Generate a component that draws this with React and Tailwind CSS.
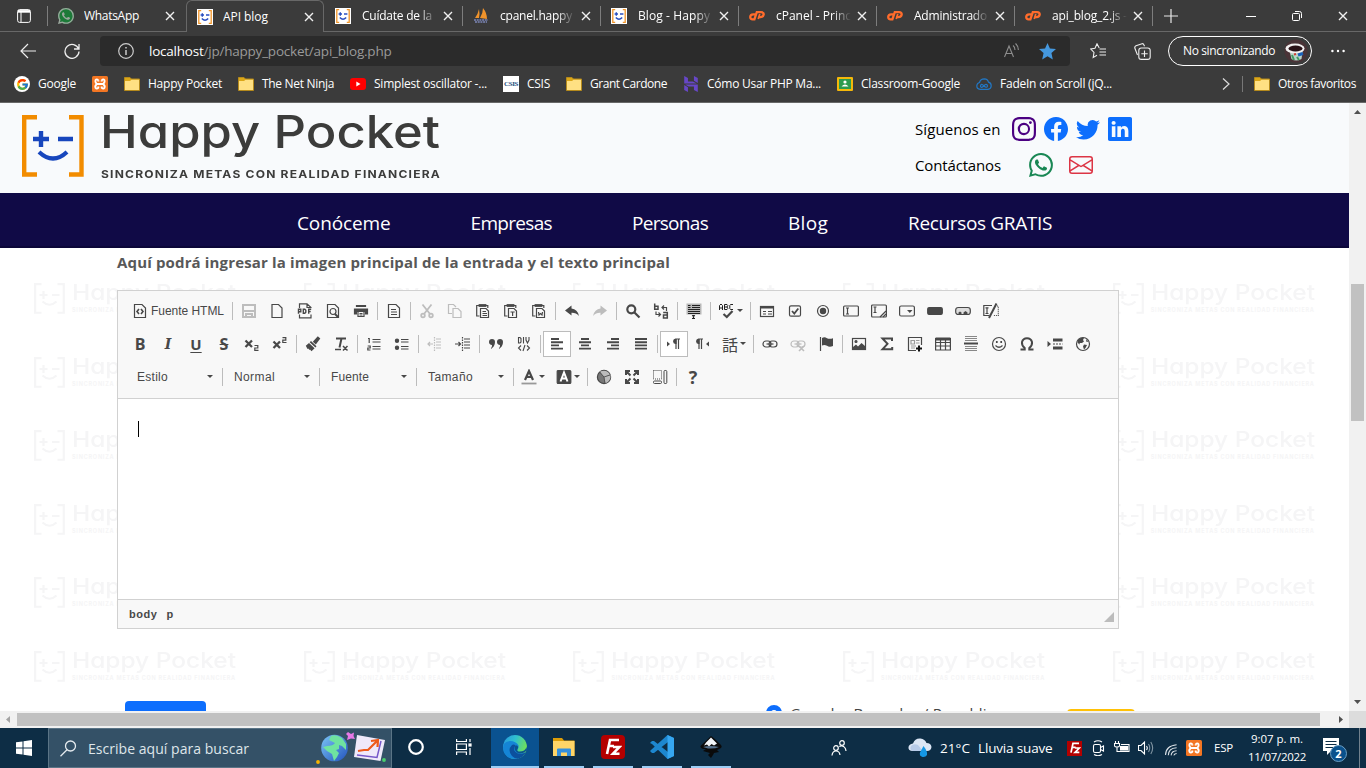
import React, { useLayoutEffect, useRef } from "react";
import { FcGoogle } from "react-icons/fc";
import { SiHostinger } from "react-icons/si";
import { BsInstagram, BsFacebook, BsTwitter, BsLinkedin, BsWhatsapp, BsEnvelope } from "react-icons/bs";

/* Text spread over a given width by letter spacing, or by horizontal scale. */
function Fit({ w, stretch, className = "", children }) {
  const ref = useRef(null);
  useLayoutEffect(() => {
    const el = ref.current;
    el.style.transform = "none";
    if (!stretch) el.style.letterSpacing = "0px";
    const natural = el.getBoundingClientRect().width;
    if (stretch) el.style.transform = `scaleX(${w / natural})`;
    else el.style.letterSpacing = `${(w - natural) / el.textContent.length}px`;
  }, [w, stretch]);
  return (
    <span ref={ref} className={"inline-block origin-left whitespace-nowrap " + className}>
      {children}
    </span>
  );
}

const UI = "font-['Open_Sans','Noto_Sans',sans-serif]";

/* ---------- shared marks ---------- */
function Face({ className, bracket, face }) {
  return (
    <svg className={className} viewBox="0 0 62 62" fill="none">
      <path d="M15 2.2H2.2V59.5H15M47 2.2H59.5V59.5H47" stroke={bracket} strokeWidth="4.4" />
      <path d="M11 24H27M19 16V32M36 24H51" stroke={face} strokeWidth="4.4" />
      <path d="M17 37Q31 50 45 37" stroke={face} strokeWidth="4.2" />
    </svg>
  );
}
const Favicon = () => (
  <span className="flex size-4 items-center justify-center bg-white">
    <svg className="size-4" viewBox="0 0 16 16" fill="none">
      <path d="M4.2 1.7H1.8V14.3H4.2M11.8 1.7H14.2V14.3H11.8" stroke="#f0952a" strokeWidth="1.3" />
      <path d="M3.6 6H7M5.3 4.3V7.7M9 6H12.4M4.8 9.6Q8 13 11.2 9.6" stroke="#2a4fc0" strokeWidth="1.4" />
    </svg>
  </span>
);
const Folder = () => (
  <svg className="size-4" viewBox="0 0 16 16">
    <path d="M.5 1.5H6L7.5 3H15.5V14.5H.5Z" fill="#dba617" stroke="#b58a1c" />
    <path d="M1 5H6L7.5 3.7H15V14H1Z" fill="#ffe083" />
  </svg>
);
const Xampp = () => (
  <svg className="size-4 shrink-0" viewBox="0 0 16 16" fill="none">
    <rect width="16" height="16" rx="1.5" fill="#f37623" />
    <path d="M6.3 4.2Q4.6 2.6 3.5 4.2Q2.8 6 4.6 8Q2.8 10 3.5 11.8Q4.6 13.4 6.3 11.8V10.5M9.7 4.2Q11.4 2.6 12.5 4.2Q13.2 6 11.4 8Q13.2 10 12.5 11.8Q11.4 13.4 9.7 11.8V10.5M6.3 4.2V5.5M9.7 4.2V5.5M5 8H11" stroke="#fff" strokeWidth="1.9" strokeLinejoin="round" />
  </svg>
);
const Close = () => (
  <svg className="size-[10px]" viewBox="0 0 10 10" stroke="#f0f0f0" strokeWidth="1.4">
    <path d="M1 1L9 9M9 1L1 9" />
  </svg>
);

/* ---------- browser ---------- */
function Tab({ icon, label, w, active, sep, fade }) {
  return (
    <div
      className={
        "relative flex h-full w-[138px] shrink-0 items-center pl-[10px] " +
        (active ? "rounded-t-md border-x border-t border-[#686868] bg-[#3b3b3b]" : "border-b border-[#686868]")
      }
    >
      <span className="flex size-4 items-center">{icon}</span>
      <span className={"overflow-hidden text-[12px] leading-4 text-white " + (fade ? "ml-[11px] w-[75px] [mask-image:linear-gradient(to_right,#000_76%,transparent_100%)]" : "ml-[10px] w-[76px]")}>
        <Fit w={w}>{label}</Fit>
      </span>
      <span className={fade ? "ml-[6px]" : "ml-[5px]"}><Close /></span>
      {sep && <i className="absolute right-0 top-[6px] h-5 w-px bg-[#7d7d7d]" />}
    </div>
  );
}
const CP = () => (
  <svg className="size-4" viewBox="0 0 16 16" fill="none" stroke="#ff6c2c" strokeWidth="2.3">
    <path d="M6.2 6.3H4.2Q1.3 6.5 1.2 9Q1.3 11.2 3.6 11.3H5.4L7.8 4.2H12Q14.8 4.4 14.7 6.5Q14.3 9 11.5 9.2H9.5" />
    <path d="M10.8 6L9.2 11" strokeWidth="1.7" />
  </svg>
);

function Tabs() {
  return (
    <div className="flex h-8 items-stretch">
      <div className="relative flex w-12 shrink-0 items-center border-b border-[#686868] pl-[17px]">
        <svg className="size-[14px]" viewBox="0 0 14 14" fill="none" stroke="#fff">
          <rect x=".6" y=".6" width="12.8" height="12.8" rx="2" />
          <path d="M1 2.4H13" strokeWidth="2.6" /><path d="M4 3V13" />
        </svg>
        <i className="absolute right-0 top-[6px] h-5 w-px bg-[#7d7d7d]" />
      </div>
      <Tab icon={<span className="flex size-4 items-center justify-center rounded-full bg-[#1c7a38] text-[#9aa79d]"><BsWhatsapp className="size-4" /></span>} label="WhatsApp" w={55} />
      <Tab active icon={<Favicon />} label="API blog" w={45} />
      <div className="w-px border-b border-[#686868]" />
      <Tab sep fade icon={<Favicon />} label="Cuídate de la" w={70} />
      <Tab sep fade icon={
        <svg className="size-4" viewBox="0 0 16 16"><path d="M2 10Q5 6 6 1Q7 6 6 10ZM7 10Q10 5 10 0Q14 5 14 11Z" fill="#f0932b" /><path d="M1 12H15M2 14H14" stroke="#7c86b8" strokeWidth="1.7" strokeDasharray="2 .7" /></svg>
      } label="cpanel.happy" w={72} />
      <Tab sep fade icon={<Favicon />} label="Blog - Happy" w={72} />
      <Tab sep fade icon={<CP />} label="cPanel - Princ" w={75} />
      <Tab sep fade icon={<CP />} label="Administrado" w={73} />
      <Tab sep fade icon={<CP />} label="api_blog_2.js -" w={75} />
      <div className="flex flex-1 items-center border-b border-[#686868] pl-[11px]">
        <svg className="size-[14px]" viewBox="0 0 14 14" stroke="#e8e8e8" strokeWidth="1.2"><path d="M7 0V14M0 7H14" /></svg>
        <svg className="ml-[68px] h-3 w-[10px]" viewBox="0 0 10 12" stroke="#fff"><path d="M0 6.5H10" /></svg>
        <svg className="ml-[36px] size-[10px]" viewBox="0 0 10 10" fill="none" stroke="#fff"><rect x=".5" y="2.5" width="7" height="7" rx="1" /><path d="M3 .5H7.5Q9.5.5 9.5 2.5V7" /></svg>
        <span className="ml-[36px]"><Close /></span>
      </div>
    </div>
  );
}

function AddressRow() {
  return (
    <div className="flex h-[38px] items-center">
      <svg className="ml-5 size-4" viewBox="0 0 16 16" fill="none" stroke="#eee" strokeWidth="1.2"><path d="M16 8H1M8 1L1 8L8 15" /></svg>
      <svg className="ml-7 size-4" viewBox="0 0 16 16" fill="none" stroke="#eee" strokeWidth="1.3"><path d="M14.6 6A7 7 0 1 0 15 8.6M15 1V6H10" /></svg>
      <div className="ml-5 flex h-[30px] w-[970px] items-center rounded bg-[#2b2b2b] pl-[18px]">
        <svg className="size-4" viewBox="0 0 16 16" fill="none" stroke="#ccc" strokeWidth="1.2"><circle cx="8" cy="8" r="7.3" /><path d="M8 7V12M8 4V5.6" strokeWidth="1.5" /></svg>
        <Fit w={54.5} className="ml-[15px] text-[13.5px] text-white">localhost</Fit>
        <Fit w={188} className="text-[13.5px] text-[#9a9a9a]">/jp/happy_pocket/api_blog.php</Fit>
        <svg className="ml-[612px] h-4 w-[15px]" viewBox="0 0 15 16" fill="none" stroke="#8e8e8e" strokeWidth="1.1"><path d="M.5 14L5 3L9.5 14M2 10.5H8M9 2.5Q11 4 11 7M11.5.5Q14.5 3 14.3 7" /></svg>
        <svg className="ml-5 size-[17px]" viewBox="0 0 16 16" fill="#4598de"><path d="M8 0L10.3 5.1L16 5.7L11.7 9.5L13 15.5L8 12.4L3 15.5L4.3 9.5L0 5.7L5.7 5.1Z" /></svg>
      </div>
      <svg className="ml-5 size-4" viewBox="0 0 16 16" fill="none" stroke="#eee" strokeWidth="1.1"><path d="M9.2 5L7 .8L5 5.3L.8 6L4 9.5L3.2 14.5L7 12.3M9.5 6H16M9.5 9H16M9.5 12H16" /></svg>
      <svg className="ml-7 size-[17px]" viewBox="0 0 17 17" fill="none" stroke="#eee" strokeWidth="1.1"><path d="M3.5 12L.8 5Q.5 3.5 2 2.7L8 .7Q9.5.5 10 2L10.5 3.2" /><rect x="4.8" y="5" width="11.4" height="11.4" rx="2.5" /><path d="M10.5 7.5V14M7.3 10.7H13.7" /></svg>
      <div className="ml-[17px] flex h-[30px] w-[144px] items-center rounded-full border border-white pl-[14px]">
        <Fit w={92} className="text-[12px] text-white">No sincronizando</Fit>
        <svg className="ml-[9px] size-6" viewBox="0 0 24 24">
          <circle cx="12" cy="12" r="11.5" fill="#4a3337" />
          <path d="M5 10H19L17.5 20Q12 23 7.5 20Z" fill="#b9d2c8" />
          <ellipse cx="11" cy="9.5" rx="9.5" ry="5" fill="#f2f0f0" /><ellipse cx="11.5" cy="9.5" rx="7" ry="3" fill="#2a1217" />
          <path d="M14 16L19 14.5" stroke="#1b61ba" strokeWidth="3" /><path d="M8 16L10 21M13 18L15 21" stroke="#3f9b62" strokeWidth="2" fill="none" /><path d="M10 15.5L12 15" stroke="#cf3c2d" strokeWidth="2" />
        </svg>
      </div>
      <svg className="ml-[19px] h-1 w-[14px]" viewBox="0 0 14 4" fill="#fff"><circle cx="1.4" cy="2" r="1.2" /><circle cx="7" cy="2" r="1.2" /><circle cx="12.6" cy="2" r="1.2" /></svg>
    </div>
  );
}

function Mark({ icon, label, w }) {
  return (
    <div className="flex items-center gap-2">
      {icon}
      {label && <Fit w={w} className="text-[12px] leading-4 text-white">{label}</Fit>}
    </div>
  );
}

function Bookmarks() {
  return (
    <div className="flex h-8 items-center gap-4 border-b border-[#686868] pb-[5px] pl-[14px]">
      <Mark icon={<span className="flex size-4 items-center justify-center rounded-full bg-white"><FcGoogle className="size-[13px]" /></span>} label="Google" w={38} />
      <Mark icon={<Xampp />} />
      <Mark icon={<Folder />} label="Happy Pocket" w={74} />
      <Mark icon={<Folder />} label="The Net Ninja" w={72} />
      <Mark icon={<svg className="size-4" viewBox="0 0 16 16"><rect y="2" width="16" height="12" rx="3" fill="#f00" /><path d="M6.3 5.5V10.5L10.5 8Z" fill="#fff" /></svg>} label="Simplest oscillator -..." w={113} />
      <Mark icon={<span className="flex size-4 items-center justify-center bg-white font-['Liberation_Serif',serif] text-[7px] font-bold tracking-[-0.4px] text-[#1c4e7c]">CSIS</span>} label="CSIS" w={23} />
      <Mark icon={<Folder />} label="Grant Cardone" w={77} />
      <Mark icon={<SiHostinger className="size-4 text-[#6747c7]" />} label="Cómo Usar PHP Ma..." w={114} />
      <Mark icon={<svg className="size-4" viewBox="0 0 16 16"><rect y="1" width="16" height="14" rx="1" fill="#f6b80a" /><rect x="2" y="3" width="12" height="10" fill="#2c9b4f" /><circle cx="8" cy="6" r="1.6" fill="#fff" /><path d="M4.5 10.5Q8 6.5 11.5 10.5Z" fill="#fff" /></svg>} label="Classroom-Google" w={99} />
      <Mark icon={<svg className="size-4" viewBox="0 0 16 16" fill="none" stroke="#2277c4" strokeWidth="1.2"><path d="M4 13.3Q.7 13 .8 9.8Q1 7 3.5 6.5Q4.5 2.8 8.3 2.8Q11.8 3 12.5 6.2Q15.3 7 15.2 10Q15 13 12 13.3Z" /><path d="M8 10Q5.8 7.5 4.8 9Q4 11 5.5 11.3Q6.5 11.4 8 10Q9.5 7.7 11 8.7Q12 10 11 11Q9.7 11.8 8 10" /></svg>} label="FadeIn on Scroll (jQ..." w={112} />
      <svg className="ml-[94px] h-3 w-[8px]" viewBox="0 0 8 12" fill="none" stroke="#ddd" strokeWidth="1.2"><path d="M1 .5L7 6L1 11.5" /></svg>
      <i className="-ml-[4px] h-4 w-px bg-[#777]" />
      <div className="-ml-[5px]"><Mark icon={<Folder />} label="Otros favoritos" w={78} /></div>
    </div>
  );
}

/* ---------- site ---------- */
function SiteHeader() {
  return (
    <header className="flex h-[90px] shrink-0 bg-[#f8fafc] pl-[22px] pt-3">
      <Face className="size-[62px]" bracket="#f28c00" face="#1746bd" />
      <div className="ml-[16px] flex w-[341px] flex-col text-[#3c3c3b]">
        <Fit w={340} stretch className="-mt-[8px] self-start font-['Inter',sans-serif] text-[45px] font-medium leading-[50px] [font-feature-settings:'cv11'_1]">Happy Pocket</Fit>
        <Fit w={340} stretch className="ml-px mt-[9px] self-start font-['Inter',sans-serif] text-[11px] font-bold leading-4 tracking-[1.1px]">SINCRONIZA METAS CON REALIDAD FINANCIERA</Fit>
      </div>
      <div className="ml-[474px] flex flex-col gap-3 text-[15px] leading-6 text-black">
        <div className="flex h-6 items-center">
          <Fit w={85.5} className="pt-[3px]">Síguenos en</Fit>
          <div className="ml-[11.5px] flex gap-2 pt-1 text-[#0d6efd]">
            <BsInstagram className="size-6 text-[#4b0082]" />
            <BsFacebook className="size-6" />
            <BsTwitter className="size-6" />
            <BsLinkedin className="size-6" />
          </div>
        </div>
        <div className="flex h-6 items-center">
          <Fit w={86} className="pt-[3px]">Contáctanos</Fit>
          <div className="ml-7 flex gap-4 pt-1">
            <BsWhatsapp className="size-6 text-[#198754]" />
            <BsEnvelope className="size-6 text-[#dc3545]" />
          </div>
        </div>
      </div>
    </header>
  );
}

const NAV = [["Conóceme", 93.5], ["Empresas", 81.5], ["Personas", 76], ["Blog", 40], ["Recursos GRATIS", 144]];

function Watermark() {
  return (
    <div className="flex h-[34px] gap-[7px]">
      <Face className="size-[31px]" bracket="#f5f5f6" face="#f5f5f6" />
      <div className="flex flex-col text-[#f5f5f6]">
        <Fit w={164} stretch className="-mt-[3px] self-start font-['Inter',sans-serif] text-[22px] font-medium leading-6 [font-feature-settings:'cv11'_1]">Happy Pocket</Fit>
        <Fit w={164} className="mt-[2px] self-start font-['Inter',sans-serif] text-[5.5px] font-bold leading-[8px]">SINCRONIZA METAS CON REALIDAD FINANCIERA</Fit>
      </div>
    </div>
  );
}

/* ---------- editor ---------- */
const G = ({ children, dim, sw = 1.2, fill = "none" }) => (
  <svg className={"size-4 shrink-0 " + (dim ? "text-[#bdbdbd]" : "text-[#484848]")} viewBox="0 0 16 16" fill={fill} stroke="currentColor" strokeWidth={sw}>
    {children}
  </svg>
);
const Btn = ({ children, on }) => (
  <span className={"flex h-[26px] w-7 shrink-0 items-center justify-center " + (on ? "border border-[#bcbcbc] bg-white" : "")}>{children}</span>
);
const Arrow = () => <svg className="h-[3px] w-[6px]" viewBox="0 0 6 3" fill="#484848"><path d="M0 0H6L3 3Z" /></svg>;
const Drop = ({ children }) => (
  <span className="flex h-[26px] w-[35px] shrink-0 items-center gap-[2px] pl-[6px]">{children}<Arrow /></span>
);
const Sep = () => <i className="ml-[2px] mr-[2px] h-[18px] w-px shrink-0 bg-[#bcbcbc]" />;
const Letter = ({ children, className = "" }) => (
  <b className={"flex h-4 w-4 items-center justify-center leading-4 text-[#484848] " + className}>{children}</b>
);
const page = "M2.5 1.5H10L13.5 5V14.5H2.5Z";
const clip = "M4 2.5H1.7V13H4.5M11 2.5H12.8V5";
const clipTop = <path d="M4.5 2H10.5V3H4.5Z" strokeWidth="1.8" />;
const chain = <><rect x="1" y="5" width="8" height="6" rx="3" /><rect x="7" y="5" width="8" height="6" rx="3" /><path d="M4.5 8H11.5" /></>;

function Row1() {
  return (
    <div className="flex h-[33px] items-center">
      <span className="flex w-[104px] items-center pl-[6px]">
        <G><path d={page} /><path d="M7 6L5 8.5L7 11M9 6L11 8.5L9 11" strokeWidth="1.6" /></G>
        <Fit w={73} className="ml-[3px] text-[12px]">Fuente HTML</Fit>
      </span>
      <Sep />
      <Btn><G dim sw={2}><path d="M2 2H14V14H2ZM2 8H14M5 14V11H11V14" /></G></Btn>
      <Btn><G><path d="M3 1.5H9.5L13 5V14.5H3Z" /></G></Btn>
      <Btn><G><path d="M2.5 5V.8H10L14 4.5V5M2.5 11.5V14.8H14V11.5M10 1V4.5H14" /><path strokeWidth="1.4" d="M1.5 10.8V6.3H3.8V8.8H1.5M6.3 6.3H7.8L8.8 7.3V9.2L7.8 10.2H6.3ZM11.7 10.8V6.3H14.2M11.7 8.5H13.7" /></G></Btn>
      <Btn><G><path d={page} /><circle cx="8" cy="8.5" r="3" /><path d="M10 11L13 14" strokeWidth="2" /></G></Btn>
      <Btn><G fill="currentColor"><path d="M3.5 2.5H12.5V3.5H3.5ZM1.5 6H14.5V11H12.5V8.5H3.5V11H1.5Z" /><path fill="none" d="M5 8.5V13.5H11V8.5M6.5 10.5H9.5M6.5 12H9.5" /></G></Btn>
      <Sep />
      <Btn><G><path d={page} /><path d="M5 6.5H10M5 9H11M5 11.5H11" /></G></Btn>
      <Sep />
      <Btn><G dim sw={1.8}><path d="M3.5 1.5L11 11M12.5 1.5L5 11" /><circle cx="4" cy="12.5" r="1.8" /><circle cx="12" cy="12.5" r="1.8" /></G></Btn>
      <Btn><G dim><path d="M5 10.5H1.5V1.5H6.5L9 4M6 5.5H11L14 8.5V14.5H6Z" /></G></Btn>
      <Btn><G><path d={clip} />{clipTop}<path d="M5.5 5.5H11L13.5 8V14.5H5.5ZM7.5 8.5H11M7.5 10.5H12M7.5 12.5H12" /></G></Btn>
      <Btn><G><path d={clip} />{clipTop}<path d="M5.5 5.5H11L13.5 8V14.5H5.5ZM7.5 9H11.7M9.6 9V13" /></G></Btn>
      <Btn><G><path d={clip} />{clipTop}<path d="M5.5 5.5H11L13.5 8V14.5H5.5ZM7.5 9L8 12L9.5 10.5L11 12L11.5 9" /></G></Btn>
      <Sep />
      <Btn><G fill="currentColor" sw={0}><path d="M1 7.5L7.5 2.5V5.5Q13.5 6 15 13Q12 9.5 7.5 9.7V12.5Z" /></G></Btn>
      <Btn><G dim fill="currentColor" sw={0}><path d="M15 7.5L8.5 2.5V5.5Q2.5 6 1 13Q4 9.5 8.5 9.7V12.5Z" /></G></Btn>
      <Sep />
      <Btn><G sw={2.2}><circle cx="6.3" cy="6.3" r="4" /><path d="M9.5 9.5L14.5 14.5" /></G></Btn>
      <Btn><G sw={1.5}><path d="M1.7.5V6.3H5V3.2H1.7M10.2 9.5H14.3V15H10.5V12H14.3" /><path strokeWidth="1.2" d="M9 4.5H13.5V8M11 2.5L9 4.5L11 6.5M3 8.5V11.5H7.5M5.5 9.5L7.5 11.5L5.5 13.5" /></G></Btn>
      <Sep />
      <Btn><G><path d="M.5.5H15.5V11.5H.5Z" fill="#b9b9b9" stroke="none" /><path stroke="#222" d="M2 2.5H4.5M6 2.5H14M2 4.5H4.5M6 4.5H14M2 6.5H14M2 8.5H14M2 10.5H14M6 12.5L7.5 13L9 12.5M7.5 12V16M6 15.5H9" /></G></Btn>
      <Sep />
      <Drop><G><path stroke="#222" strokeWidth="1" d="M.5 7V2.5L2 1L3.5 2.5V7M.5 5H3.5M5.5 1.5V6.5H8L8.8 5.5L8 4L8.8 2.5L8 1.5H5.5M5.5 4H8M14 1.5H11.5L10.8 2.5V5.5L11.5 6.5H14" /><path d="M4.5 11L7.8 14L13.5 8" strokeWidth="2.2" /></G></Drop>
      <Sep />
      <Btn><G><rect x="1.5" y="3.5" width="13" height="10" /><path d="M1.5 4.5H14.5" strokeWidth="2" /><path d="M4 8.5H7M9 8.5H13M4 11H7M9 11H13" /></G></Btn>
      <Btn><G><rect x="2.5" y="2.8" width="11" height="10.4" rx="1.5" /><path d="M5 8L7.3 10.5L11.3 5.5" strokeWidth="1.8" /></G></Btn>
      <Btn><G><circle cx="8" cy="8" r="5.5" /><circle cx="8" cy="8" r="2.6" fill="currentColor" /></G></Btn>
      <Btn><G><rect x=".6" y="3" width="14.8" height="10" rx="1" /><path d="M3 5H6M4.5 5V11M3 11H6" /></G></Btn>
      <Btn><G><rect x=".6" y="2" width="14.8" height="12" rx="1" /><path d="M2.5 4H5.5M4 4V9.5M2.5 9.5H5.5M9 14L15 8M12 14L15 11" /></G></Btn>
      <Btn><G><rect x=".6" y="3" width="14.8" height="10" rx="1.5" /><path d="M8 7H13.5L10.8 10Z" fill="currentColor" stroke="none" /></G></Btn>
      <Btn><G fill="currentColor"><rect x=".7" y="4.5" width="14.6" height="7" rx="1.5" /></G></Btn>
      <Btn><G><rect x=".7" y="4.5" width="14.6" height="7" rx="2.5" fill="#ddd" /><path d="M3.5 11V9.5L5 8.5L6.5 9.5V11ZM8.5 11V9.5L10.5 8L12.5 9.5V11Z" fill="currentColor" stroke="none" /></G></Btn>
      <Btn><G><path d="M9 2.5H.8V12.5H6M2.5 4.8H5.5M4 4.8V10.5M2.5 10.5H5.5" /><path d="M13.5.5L6 15" strokeWidth="2" /><path d="M12 3H15.3V12.5H10" strokeDasharray="1 1" /></G></Btn>
    </div>
  );
}

const Lines = ({ a, b }) => <G sw={1.9}><path d={`M${a} 3H${b}M2 6.2H14M${a} 9.4H${b}M2 12.6H14`} /></G>;

function Row2() {
  return (
    <div className="flex h-[33px] items-center">
      <Btn><Letter className="font-['Open_Sans',sans-serif] text-[16px]">B</Letter></Btn>
      <Btn><Letter className="font-['DejaVu_Serif',serif] text-[14px] italic">I</Letter></Btn>
      <Btn><Letter className="font-['Open_Sans',sans-serif] text-[15px] underline underline-offset-2">U</Letter></Btn>
      <Btn><Letter className="font-['Open_Sans',sans-serif] text-[16px] line-through">S</Letter></Btn>
      <Btn><G><path d="M1.5 4.5L8 11M8 4.5L1.5 11" strokeWidth="2.3" /><path d="M10.5 9.5H13.8V12H10.8V14.3H14.5" /></G></Btn>
      <Btn><G><path d="M1.5 5.5L8 12M8 5.5L1.5 12" strokeWidth="2.3" /><path d="M10.5 1.7H13.8V4.2H10.8V6.5H14.5" /></G></Btn>
      <Sep />
      <Btn><G fill="currentColor" sw={0}><path d="M12.8.3L15.3 2.5L10.8 8.5L7.8 5.8Z" /><path d="M6 5L11.5 10.3L10.4 11.5L4.7 6.3ZM4 7L9.6 12.2L6.5 15.2L5 13.5L4.5 14L3.2 12.5L2.5 13L.8 9.8Z" /></G></Btn>
      <Btn><G><path d="M3 2.5H13M8.5 2.5L6.5 11.5" strokeWidth="2" /><path d="M2 13.5H8M10 10L14.5 14.5M14.5 10L10 14.5" strokeWidth="1.5" /></G></Btn>
      <Sep />
      <Btn><G><path d="M2 2.5H3.2V7M1.7 10H4.2V12H1.8V14H4.5M6.5 3.5H14.5M6.5 6H14.5M6.5 10.5H14.5M6.5 13H14.5" /></G></Btn>
      <Btn><G><path d="M7 3.5H14.5M7 6H14.5M7 10.5H14.5M7 13H14.5" /><circle cx="3" cy="4.7" r="1.6" fill="currentColor" /><circle cx="3" cy="11.7" r="1.6" fill="currentColor" /></G></Btn>
      <Sep />
      <Btn><G dim><path d="M7.5 1V15" strokeDasharray="1.5 1" /><path d="M1 8H6M3 6L1 8L3 10M9 3H14M9 6H14M9 9H14M9 12H14" /></G></Btn>
      <Btn><G><path d="M7.5 1V15" strokeDasharray="1.5 1" /><path d="M0 8H5.5M3.5 6L5.5 8L3.5 10M9 3H15M9 6H15M9 9H15M9 12H15" /></G></Btn>
      <Sep />
      <Btn><G fill="currentColor" sw={0}><path d="M1 6A3 3 0 1 1 7 6Q7 11 2.5 13Q4.5 10.5 4 9Q1 8.5 1 6ZM9 6A3 3 0 1 1 15 6Q15 11 10.5 13Q12.5 10.5 12 9Q9 8.5 9 6Z" /></G></Btn>
      <Btn><G sw={1.1}><path d="M2.5 1.5V7H4L5 6V2.5L4 1.5ZM7.5 1V7.5M10 1V4L11.5 7L13 4V1M5 9.5L2.5 12L5 14.5M11 9.5L13.5 12L11 14.5M9 9L7 15" /></G></Btn>
      <Sep />
      <Btn on><G sw={1.9}><path d="M2 3H10M2 6.2H14M2 9.4H10M2 12.6H14" /></G></Btn>
      <Btn><Lines a={4} b={12} /></Btn>
      <Btn><Lines a={6} b={14} /></Btn>
      <Btn><Lines a={2} b={14} /></Btn>
      <Sep />
      <Btn on><G><path d="M1 5.5V10.5L4 8Z" fill="currentColor" stroke="none" /><path d="M14 3H9.5A2.3 2.3 0 0 0 9.5 7.5H10V3Z" fill="currentColor" /><path d="M10 3V13M12.5 3V13" /></G></Btn>
      <Btn><G><path d="M15 5.5V10.5L12 8Z" fill="currentColor" stroke="none" /><path d="M9 3H4.5A2.3 2.3 0 0 0 4.5 7.5H5V3Z" fill="currentColor" /><path d="M5 3V13M7.5 3V13" /></G></Btn>
      <Drop><span className="w-4 font-['Noto_Sans_CJK_JP',sans-serif] text-[16px] leading-4">話</span></Drop>
      <Sep />
      <Btn><G>{chain}</G></Btn>
      <Btn><G dim>{chain}<path d="M9 10L14 15M14 10L9 15" strokeWidth="1.6" /></G></Btn>
      <Btn><G><path d="M2.5 1V15" /><path d="M4 2Q6.5.5 9 2.2Q11.5 3.5 15 2.2V10Q11.5 11.5 9 9.8Q6.5 8.5 4 9.5Z" fill="currentColor" stroke="none" /></G></Btn>
      <Sep />
      <Btn><G><rect x="1.5" y="2.5" width="13" height="11" /><circle cx="5" cy="5.5" r="1" fill="currentColor" /><path d="M2 13V11L5 8.5L7 10.5L10.5 7L14 10V13Z" fill="currentColor" stroke="none" /></G></Btn>
      <Btn><G sw={2}><path d="M13 5V2.5H3.5L8.5 7.8L3.5 13.3H13.2V11" /></G></Btn>
      <Btn><G><path d="M9 14.5H1.5V1.5H14.5V9" /><path d="M4 4.5H7.5V8H4ZM9 4.5H12.5M9 7H12.5M4 10H9M4 12H8" stroke="#999" /><path d="M12 9.5V15.5M9 12.5H15" stroke="#111" strokeWidth="2" /></G></Btn>
      <Btn><G><path d="M.6 2.5H15.4V14H.6ZM.6 6.5H15.4M.6 10H15.4M5.5 4V14M10.5 4V14" /><path d="M.6 3H15.4" strokeWidth="3" /></G></Btn>
      <Btn><G sw={1}><path d="M2 .5H14M2 2.5H14M2 4.5H14M2 10.5H14M2 12.5H14M2 14.5H14" stroke="#888" /><path d="M1 7.5H15" strokeWidth="2" /></G></Btn>
      <Btn><G><circle cx="8" cy="8" r="6.5" /><path d="M5.8 5V7M10.2 5V7" strokeWidth="1.7" /><path d="M4.5 9.5Q8 13 11.5 9.5" /></G></Btn>
      <Btn><G sw={2}><path d="M1.5 13.5H5.7V12Q2.5 9.5 3 6Q4 2.2 8 2.2T13 6Q13.5 9.5 10.3 12V13.5H14.5" /></G></Btn>
      <Btn><G><path d="M.5 5V11L4 8Z" fill="currentColor" stroke="none" /><path d="M6 4H15.5M6 12H15.5" strokeWidth="2.8" /><path d="M6 8H15.5" strokeDasharray="2 1" /></G></Btn>
      <Btn><G><circle cx="8" cy="8" r="6.5" /><path d="M3 4Q6 1 9 2L8 4L9 5.5L7 7H4.5L5 8.5Q3.5 8 2.5 6.5ZM9 8.5L12 9L10.5 12L9 13.5L8 10.5ZM11 3L13.5 5.5L11.5 6Z" fill="currentColor" stroke="none" /></G></Btn>
    </div>
  );
}

const Combo = ({ label, w }) => (
  <>
    <span className="flex h-[26px] w-[92px] shrink-0 items-center justify-between pl-[11px] pr-[5px] text-[12px]">
      <Fit w={w}>{label}</Fit><Arrow />
    </span>
    <i className="ml-[4px] h-[18px] w-px shrink-0 bg-[#bcbcbc]" />
  </>
);

function Row3() {
  return (
    <div className="flex h-[33px] items-center">
      <Combo label="Estilo" w={31} /><Combo label="Normal" w={41} /><Combo label="Fuente" w={38} /><Combo label="Tamaño" w={45} />
      <span className="w-px" />
      <Drop><G><path d="M4 11L8 2L12 11M5.5 8H10.5" strokeWidth="2.2" /><path d="M.5 14.5H15.5" stroke="#999" strokeWidth="1.8" /></G></Drop>
      <Drop><G><rect x="1.2" y="1.5" width="13.6" height="13" rx="1" fill="currentColor" /><path d="M4.5 12.5L8 3.5L11.5 12.5M5.7 9.5H10.3" stroke="#fff" strokeWidth="2" /></G></Drop>
      <Sep />
      <Btn><G><circle cx="8" cy="8" r="6.6" fill="#777" /><path d="M8 8L4 2.5Q11 0 14 5.5ZM8 8L14.5 6Q15 12 9.5 14.3Z" fill="#bbb" stroke="none" /><path d="M8 8L3.5 3M8 8L14 6M8 8L9 14.5" strokeWidth=".8" /></G></Btn>
      <Btn><G sw={2}><path d="M6.5 6.5L2.5 2.5M9.5 6.5L13.5 2.5M6.5 9.5L2.5 13.5M9.5 9.5L13.5 13.5M2 6V2H6M10 2H14V6M2 10V14H6M10 14H14V10" /></G></Btn>
      <Btn><G sw={1}><path d="M1.5 1.5H9.5V10H1.5Z" strokeDasharray="1 1" /><rect x="1.5" y="12" width="8" height="2.5" rx="1" /><rect x="12" y="1.5" width="2.8" height="13" rx="1" /></G></Btn>
      <Sep />
      <Btn><Letter className="font-['Open_Sans',sans-serif] text-[18px]">?</Letter></Btn>
    </div>
  );
}

function Editor() {
  return (
    <div className="relative flex h-[339px] w-[1002px] shrink-0 flex-col border border-[#d1d1d1] bg-white font-['Liberation_Sans',sans-serif] text-[#484848]">
      <div className="h-[108px] shrink-0 border-b border-[#d1d1d1] bg-[#f8f8f8] pl-2 pt-[3px]">
        <Row1 /><Row2 /><Row3 />
      </div>
      <div className="flex-1 pl-5 pt-[22px]"><i className="block h-4 w-px bg-black" /></div>
      <div className="flex h-[29px] shrink-0 items-center justify-between border-t border-[#d1d1d1] bg-[#f8f8f8] pl-[11px] pr-1 text-[11px] font-bold">
        <span className="flex gap-[9px]"><Fit w={28.5}>body</Fit><span>p</span></span>
        <svg className="mt-[6px] size-[10px]" viewBox="0 0 10 10" fill="#bcbcbc"><path d="M10 0V10H0Z" /></svg>
      </div>
    </div>
  );
}

/* Tiles wholly behind the editor stay empty. */
const hidden = (i) => i % 5 > 0 && i % 5 < 4 && i >= 5 && i < 25;

function Site() {
  return (
    <div className="flex h-[608px] w-[1349px] flex-col overflow-hidden bg-white">
      <SiteHeader />
      <nav className="flex h-[55px] shrink-0 items-center gap-20 border-b-2 border-[#0b0638] bg-[#100a46] pl-[297px] pt-[8px] text-[19px] text-white">
        {NAV.map(([t, w]) => <Fit key={t} w={w}>{t}</Fit>)}
      </nav>
      <main className="relative flex flex-1 flex-col overflow-hidden pl-[117px]">
        <div className="absolute left-[34px] top-[35px] grid grid-cols-[repeat(5,269.7px)] auto-rows-[73.6px]">
          {Array.from({ length: 30 }, (_, i) => (hidden(i) ? <div key={i} /> : <Watermark key={i} />))}
        </div>
        <div className="relative flex h-[42px] shrink-0 items-start pt-[2px]">
          <Fit w={553} className="text-[15px] font-bold leading-6 text-[#585858]">Aquí podrá ingresar la imagen principal de la entrada y el texto principal</Fit>
        </div>
        <Editor />
        <div className="relative flex shrink-0 items-start pl-2 pt-[72px]">
          <div className="h-9 w-[81px] rounded bg-[#0d6efd]" />
          <div className="ml-[560px] mt-1 size-4 rounded-full border-[5px] border-[#0d6efd] bg-white" />
          <Fit w={219} className="ml-[8px] text-[15px] leading-6 text-[#444]">Guardar Borrador / Republicar</Fit>
          <div className="ml-[58px] mt-2 h-9 w-[68px] rounded bg-[#ffc107]" />
        </div>
      </main>
    </div>
  );
}

/* ---------- taskbar ---------- */
const Cell = ({ children, w, on, open }) => (
  <div className={"flex h-10 shrink-0 items-center justify-center border-b-2 " + w + (on ? " bg-[#0a5290]" : "") + (open ? " border-[#9ccdf5]" : " border-transparent")}>{children}</div>
);
const Fz = ({ big }) => (
  <span className={"flex shrink-0 items-center justify-center bg-[#b30000] text-white " + (big ? "size-6 rounded-sm" : "size-[15px]")}>
    <svg className={big ? "size-[18px]" : "size-3"} viewBox="0 0 18 18" fill="none" stroke="#fff" strokeWidth="2.6"><path d="M3 16L6 2H15M5 8H10M9 9H15.5L9 15.7H15.5" /></svg>
  </span>
);

function Taskbar() {
  return (
    <footer className="flex h-10 items-center bg-[#0d2d45] text-white">
      <div className="flex w-12 shrink-0 items-center justify-center">
        <svg className="size-4" viewBox="0 0 16 16" fill="#fff"><path d="M0 2.3L6.5 1.4V7.5H0ZM7.5 1.3L16 0V7.5H7.5ZM0 8.5H6.5V14.6L0 13.7ZM7.5 8.5H16V16L7.5 14.8Z" /></svg>
      </div>
      <div className="flex h-10 w-[344px] shrink-0 items-center border border-[#5a7486] bg-[#345167] pl-[11px]">
        <svg className="size-[17px]" viewBox="0 0 17 17" fill="none" stroke="#e5ebef" strokeWidth="1.3"><circle cx="10.5" cy="6" r="5" /><path d="M7 9.7L.5 16.3" /></svg>
        <Fit w={161} className="ml-[11px] text-[14px] text-[#dfe6ea]">Escribe aquí para buscar</Fit>
        <svg className="ml-[66px] h-9 w-[74px]" viewBox="0 0 74 36">
          <defs><linearGradient id="sea" x2="1" y2="1"><stop stopColor="#7cc6f7" /><stop offset="1" stopColor="#2353bd" /></linearGradient></defs>
          <circle cx="19.5" cy="18" r="13.3" fill="url(#sea)" />
          <path d="M16 6Q21 4 27 8L31 14L31 20L27 16L24 15L24 19L21 20L24 23L22 27L19 31L17 24L12 21L8 17L12 16Q18 16 20 13L14 10Z" fill="#6fe3a0" />
          <path d="M33 2L36 4L39 2.5L38.5 6L40 9L36 8.5L32 10L33 6L31 4Z" fill="#e879e8" />
          <path d="M42 5L70 10L65.5 31L39 27Z" fill="#efe9fa" /><path d="M42 25L62 27.5L66 11" fill="none" stroke="#7657c9" strokeWidth="1.5" />
          <path d="M43 21L49 20L53 20L62 11M56 11L63 10L62.5 17" fill="none" stroke="#ee5a1b" strokeWidth="2.2" />
          <circle cx="3" cy="32" r="1.9" fill="#f5b400" /><circle cx="69" cy="30" r="1.9" fill="#48cf6d" />
        </svg>
      </div>
      <Cell w="w-12"><svg className="size-[18px]" viewBox="0 0 18 18" fill="none" stroke="#fff" strokeWidth="2.2"><circle cx="9" cy="9" r="6.8" /></svg></Cell>
      <Cell w="w-12"><svg className="size-4" viewBox="0 0 16 16" fill="none" stroke="#fff" strokeWidth="1.2"><path d="M.6 0V2.5H10.4V0M.6 16V13H10.4V16M.6 5H10.4V10.5H.6ZM14 0V3M14 9V16" /><rect x="13" y="5" width="2" height="2" fill="#fff" /></svg></Cell>
      <div className="w-[3px]" />
      <Cell w="w-12" on open>
        <svg className="size-6" viewBox="0 0 24 24">
          <defs><linearGradient id="eg" x2="1" y2=".4"><stop stopColor="#2796e0" /><stop offset=".5" stopColor="#2fc0cf" /><stop offset="1" stopColor="#6fe05a" /></linearGradient></defs>
          <circle cx="12" cy="12" r="11.9" fill="url(#eg)" />
          <path d="M0 13Q0 6.5 7 6Q13 6 15.5 10.5Q16 13 14 15Q14 18.5 19 18.3Q21 18 23 16.5Q19 24 12 24Q1 23.5 0 13Z" fill="#1585d6" />
          <path d="M9 10Q4 15 9 21Q12 24 15 23.7Q20 22.5 23 17Q17 21 12.5 17Q9.5 14 12.5 10.5Q11 9 9 10Z" fill="#0c509d" />
          <path d="M12.5 10.5Q10 14 14 17.5Q18.5 20 24 15.5L23.5 12Q22 17 15.5 16.5Q13.5 15.5 14.5 14Q16 12 14 10.5Z" fill="#0a5290" />
        </svg>
      </Cell>
      <Cell w="ml-[5px] w-10" open><svg className="size-[22px]" viewBox="0 0 22 20"><path d="M0 1H9L11 3.5H21.5V19H0Z" fill="#dd9d08" /><path d="M0 4H21.5V19H0Z" fill="#ffd567" /><path d="M4 19V12.5Q4 11.5 5 11.5H17Q18 11.5 18 12.5V19H14V15.5H8V19Z" fill="#3490dd" /></svg></Cell>
      <Cell w="ml-[9px] w-10" open><Fz big /></Cell>
      <Cell w="ml-[9px] w-10" open><svg className="size-6" viewBox="0 0 24 24"><path d="M17.5 0L24 3V21L17.5 24L2 9L0 8L2 6L4 6L18 17V7L4 18L2 18L0 16L1 15Z" fill="#1d87cf" /><path d="M17.5 0L24 3V21L17.5 24Z" fill="#36a7f1" /></svg></Cell>
      <Cell w="ml-[9px] w-10" open><svg className="size-[22px]" viewBox="0 0 22 22"><path d="M11 0Q13 1 21 9Q23 12 19 13L17 14L19 16L14 17L13 19L11 22L8 19L10 17L3 15L6 13Q0 13 .5 10Z" fill="#0a0a0a" /><path d="M11 1.5L17 7.5L14 9.5L11.5 8L9 10.5L7 8.5L4 9.5L6 6.5Z" fill="#f2f5f8" /><path d="M3 11Q10 9 19 11Q15 13 8 12.5Z" fill="#54708c" /></svg></Cell>
      <svg className="ml-[100px] size-4 shrink-0" viewBox="0 0 16 16" fill="none" stroke="#fff" strokeWidth="1.2"><circle cx="11" cy="3" r="2.3" /><circle cx="5" cy="8" r="2.3" /><path d="M1 15.5Q1.5 11 5 11T9 15M8.3 6.5Q10 5.5 11 6Q14.5 6.5 15 11" /></svg>
      <svg className="ml-[61px] h-5 w-6 shrink-0" viewBox="0 0 24 20"><path d="M5 13Q0 13 .5 9Q1 6 5 5.5Q7 0 12.5.5Q17 1 18.5 5Q23 5 23.5 9Q23 13 19 13Z" fill="#dbe6f5" /><path d="M5 13Q1 12 3 8Q6 5 10 7L15 13Z" fill="#b7cbe8" /><path d="M15.5 8Q20 14 19 17Q17.5 19.5 14.5 19Q11 18 12 14.5Z" fill="#1497e6" /></svg>
      <Fit w={30} className="ml-[8px] text-[13.5px]">21°C</Fit>
      <Fit w={74.5} className="ml-[8px] text-[13.5px]">Lluvia suave</Fit>
      <span className="ml-[14.5px]"><Fz /></span>
      <svg className="ml-[8px] size-4 shrink-0" viewBox="0 0 16 16" fill="none" stroke="#fff" strokeWidth="1.1"><rect x="3.5" y="4.5" width="7" height="8" rx="1.5" /><path d="M10.5 7.5L13.5 6V11L10.5 9.5M4 2Q8-.5 12 2M4 14.5Q8 17 12 14.5" /></svg>
      <svg className="ml-[8px] size-4 shrink-0" viewBox="0 0 16 16" fill="none" stroke="#fff" strokeWidth="1.1"><path d="M1.5 1V3M4.5 1V3M.5 3.5H5.5V6Q5 7 3 7Q1 7 .5 6ZM3 7V11.5H15V4.5H7" /><rect x="6.5" y="6.5" width="7" height="3.5" fill="#fff" /></svg>
      <svg className="ml-[8px] size-4 shrink-0" viewBox="0 0 16 16" fill="none" stroke="#fff" strokeWidth="1.1"><path d="M.5 5.5H3L6.5 2V14L3 10.5H.5ZM8.5 6Q10 8 8.5 10" /><path d="M10.5 4Q13 8 10.5 12M12.8 2Q16.5 8 12.8 14" stroke="#8295a3" /></svg>
      <svg className="ml-[10px] mt-1 h-3 w-4 shrink-0" viewBox="0 0 16 13" fill="none" stroke="#dfe5ea" strokeWidth="1.1"><path d="M1 12Q1 2 13 .7M4 12.3Q4 4.5 13 4M7 12.3Q7.5 7.5 13 7.3M10 12.3Q10.3 10.5 13 10.3" /></svg>
      <span className="ml-[6px]"><Xampp /></span>
      <Fit w={19} className="ml-[12px] text-[11.5px]">ESP</Fit>
      <div className="ml-[14px] flex w-[60px] flex-col items-center text-[11.5px] leading-[18px]">
        <Fit w={52}>9:07 p. m.</Fit>
        <Fit w={58}>11/07/2022</Fit>
      </div>
      <svg className="ml-[16px] mt-1 h-6 w-6 shrink-0" viewBox="0 0 24 24"><path d="M0 0H16V13H8L4 17V13H0Z" fill="#fff" /><path d="M2.5 3.5H13.5M2.5 6.5H13.5M2.5 9.5H10" stroke="#0d2d45" /><circle cx="15.5" cy="15.5" r="8" fill="#0a518c" stroke="#6c9fc4" /><text x="15.5" y="19.5" textAnchor="middle" fill="#fff" fontSize="11" fontWeight="bold">2</text></svg>
      <i className="ml-[12px] h-10 w-px bg-[#71818d]" />
    </footer>
  );
}

export default function App() {
  return (
    <div className={"flex h-[768px] w-[1366px] flex-col overflow-hidden " + UI}>
      <div className="h-[103px] shrink-0 bg-[#3b3b3b]"><Tabs /><AddressRow /><div className="h-px" /><Bookmarks /></div>
      <div className="flex h-[608px] shrink-0">
        <Site />
        <div className="flex w-[17px] flex-col items-center bg-[#f1f1f1]">
          <svg className="mt-[7px] h-1 w-[7px]" viewBox="0 0 7 4" fill="#505050"><path d="M0 4H7L3.5 0Z" /></svg>
          <div className="mt-[170px] h-[137px] w-[13px] bg-[#c1c1c1]" />
          <svg className="mt-auto mb-[7px] h-1 w-[7px]" viewBox="0 0 7 4" fill="#505050"><path d="M0 0H7L3.5 4Z" /></svg>
        </div>
      </div>
      <div className="flex h-[17px] shrink-0 items-center bg-[#f1f1f1]">
        <svg className="ml-[6px] h-[7px] w-1" viewBox="0 0 4 7" fill="#a3a3a3"><path d="M4 0V7L0 3.5Z" /></svg>
        <div className="ml-[7px] h-[13px] w-[1303px] bg-[#c1c1c1]" />
        <svg className="ml-[19px] h-[7px] w-1" viewBox="0 0 4 7" fill="#505050"><path d="M0 0V7L4 3.5Z" /></svg>
        <div className="ml-auto h-[17px] w-[17px] bg-[#dcdcdc]" />
      </div>
      <Taskbar />
    </div>
  );
}
